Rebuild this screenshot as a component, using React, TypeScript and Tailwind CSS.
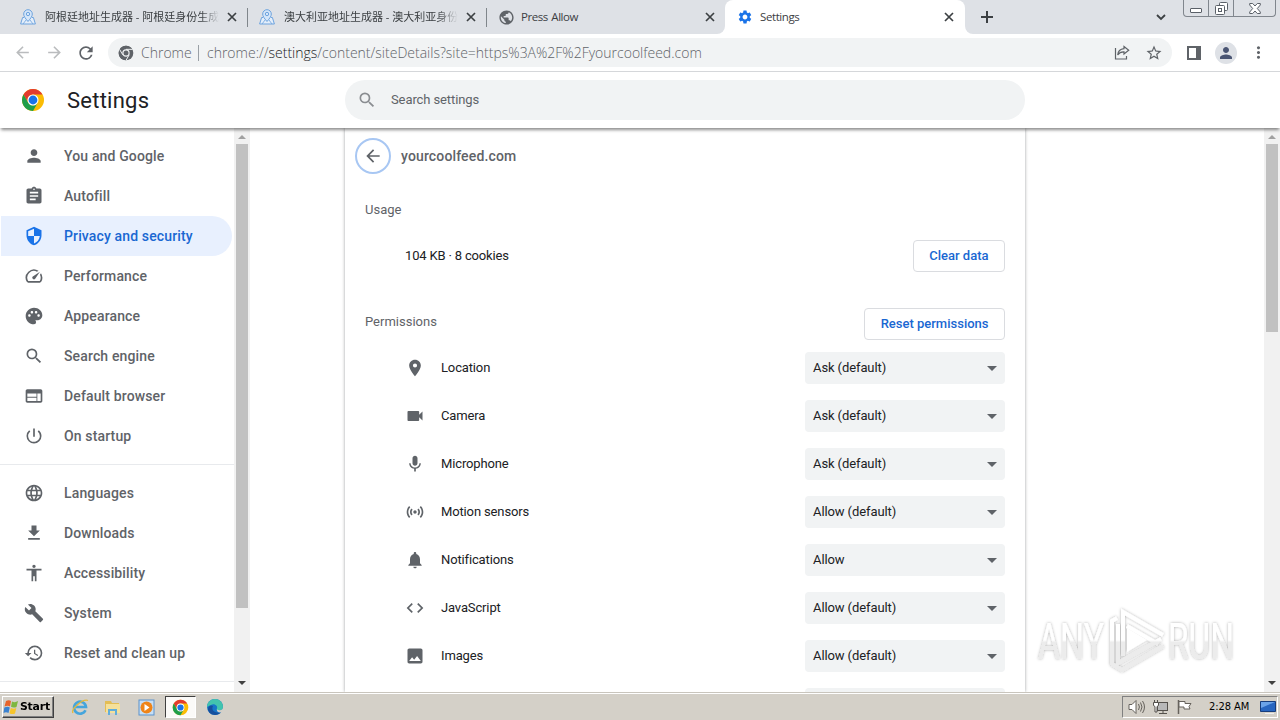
import type { ReactNode } from "react";
import {
  MdAccessibility,
  MdArrowBack,
  MdArrowForward,
  MdAssignment,
  MdBuild,
  MdCode,
  MdImage,
  MdLanguage,
  MdMic,
  MdMoreVert,
  MdNotifications,
  MdPalette,
  MdPerson,
  MdPlace,
  MdPowerSettingsNew,
  MdPublic,
  MdRefresh,
  MdRestore,
  MdSearch,
  MdSecurity,
  MdSensors,
  MdSettings,
  MdSpeed,
  MdStarBorder,
  MdVideocam,
  MdWeb,
} from "react-icons/md";

const NAV_MAIN = [
  { label: "You and Google", icon: MdPerson },
  { label: "Autofill", icon: MdAssignment },
  { label: "Privacy and security", icon: MdSecurity, active: true },
  { label: "Performance", icon: MdSpeed },
  { label: "Appearance", icon: MdPalette },
  { label: "Search engine", icon: MdSearch },
  { label: "Default browser", icon: MdWeb },
  { label: "On startup", icon: MdPowerSettingsNew },
];

const NAV_ADVANCED = [
  { label: "Languages", icon: MdLanguage },
  { label: "Downloads", icon: DownloadIcon },
  { label: "Accessibility", icon: MdAccessibility },
  { label: "System", icon: MdBuild },
  { label: "Reset and clean up", icon: MdRestore },
];

const PERMISSIONS = [
  { label: "Location", value: "Ask (default)", icon: MdPlace },
  { label: "Camera", value: "Ask (default)", icon: MdVideocam },
  { label: "Microphone", value: "Ask (default)", icon: MdMic },
  { label: "Motion sensors", value: "Allow (default)", icon: MdSensors },
  { label: "Notifications", value: "Allow", icon: MdNotifications },
  { label: "JavaScript", value: "Allow (default)", icon: MdCode },
  { label: "Images", value: "Allow (default)", icon: MdImage },
];

function DownloadIcon({ size = 20, className }: { size?: number; className?: string }) {
  return (
    <svg width={size} height={size} viewBox="0 0 24 24" fill="currentColor" className={className}>
      <path d="M19 9h-4V3H9v6H5l7 7 7-7zM5 18v2h14v-2H5z" />
    </svg>
  );
}

function ChromeLogo({ size, mono }: { size: number; mono?: boolean }) {
  return (
    <svg width={size} height={size} viewBox="0 0 48 48" className="shrink-0">
      <circle cx="24" cy="24" r="22" fill={mono ? "#5f6368" : "#fbbc04"} />
      <path d="M4.95 13A22 22 0 0 1 43.05 13L24 13A11 11 0 0 0 14.47 29.5Z" fill={mono ? "#5f6368" : "#e33b2e"} />
      <path d="M4.95 13L14.47 29.5A11 11 0 0 0 33.53 29.5L24 46A22 22 0 0 1 4.95 13Z" fill={mono ? "#5f6368" : "#1e9e4a"} />
      {mono && (
        <path d="M24 13H44M14.47 29.5L4.5 13M33.53 29.5L24 46" stroke="#f1f3f4" strokeWidth="3" />
      )}
      <circle cx="24" cy="24" r="11" fill={mono ? "#f1f3f4" : "#fff"} />
      <circle cx="24" cy="24" r={mono ? 7.5 : 8.8} fill={mono ? "#5f6368" : "#1a73e8"} />
    </svg>
  );
}

function MapPinLogo() {
  return (
    <svg width="16" height="16" viewBox="0 0 16 16" fill="none" stroke="#6da3de" className="shrink-0">
      <path d="M4 8.5H2.6L.6 15h14.8l-2-6.5H12" fill="#e4eefa" />
      <path d="M3 15l3-4M13 15l-3-4" strokeWidth=".8" />
      <path d="M8 12.5C5 9 3.7 7.2 3.7 5a4.3 4.3 0 0 1 8.6 0c0 2.2-1.3 4-4.3 7.5Z" fill="#d5e6f9" />
      <circle cx="8" cy="5" r="1.7" />
    </svg>
  );
}

function CloseIcon() {
  return (
    <svg width="10" height="10" viewBox="0 0 10 10" stroke="#3c4043" strokeWidth="1.7" className="shrink-0">
      <path d="M1 1l8 8M9 1L1 9" />
    </svg>
  );
}

function TabTitle({ children, className = "" }: { children: ReactNode; className?: string }) {
  return (
    <span
      className={`min-w-0 flex-1 whitespace-nowrap leading-4 text-[#3c4043] font-['Open_Sans','Noto_Sans_CJK_SC',sans-serif] ${className}`}
    >
      {children}
    </span>
  );
}

function TabStrip() {
  return (
    <div className="flex h-[34px] bg-[#dee1e6]">
      <div className="flex w-[247px] items-center pl-5 pr-[10px]">
        <MapPinLogo />
        <TabTitle className="ml-[9px] mr-[8px] text-[11px] [mask-image:linear-gradient(to_right,#000_90%,transparent)]">
          阿根廷地址生成器 - 阿根廷身份生成
        </TabTitle>
        <CloseIcon />
      </div>
      <div className="mt-2 h-[19px] w-px bg-[#80868b]" />
      <div className="flex w-[238px] items-center pl-[11px] pr-[10px]">
        <MapPinLogo />
        <TabTitle className="ml-[9px] mr-[8px] text-[11px] [mask-image:linear-gradient(to_right,#000_88%,transparent)]">
          澳大利亚地址生成器 - 澳大利亚身份
        </TabTitle>
        <CloseIcon />
      </div>
      <div className="mt-2 h-[19px] w-px bg-[#80868b]" />
      <div className="w-[238px] bg-white">
        <div className="flex h-full items-center rounded-br-lg bg-[#dee1e6] pl-[11px] pr-[10px]">
          <MdPublic size={17} className="shrink-0 text-[#5f6368]" />
          <TabTitle className="ml-[6px] text-[11.5px] tracking-[-0.45px] [word-spacing:1px]">Press Allow</TabTitle>
          <CloseIcon />
        </div>
      </div>
      <div className="flex w-[240px] items-center rounded-t-lg bg-white pl-[12px] pr-[11px]">
        <MdSettings size={16} className="shrink-0 text-[#1a73e8]" />
        <TabTitle className="ml-[7px] text-[11.5px] tracking-[-0.4px]">Settings</TabTitle>
        <CloseIcon />
      </div>
      <div className="flex flex-1 bg-white">
        <div className="flex flex-1 items-center rounded-bl-lg bg-[#dee1e6] pl-4">
          <svg width="12" height="12" viewBox="0 0 12 12" stroke="#3c4043" strokeWidth="2">
            <path d="M6 0v12M0 6h12" />
          </svg>
          <svg width="10" height="7" viewBox="0 0 10 7" fill="none" stroke="#3c4043" strokeWidth="1.8" className="ml-[163px]">
            <path d="M1 1l4 4 4-4" />
          </svg>
        </div>
      </div>
      <div className="flex bg-[#dee1e6] pr-1">
        <div className="flex h-[17px] w-[93px] rounded-b-[4px] border border-t-0 border-[#80868d]">
          <div className="flex w-[25px] items-end justify-center border-r border-[#80868d] pb-[3px]">
            <div className="h-[5px] w-3 rounded-[1px] border border-[#5a6068] bg-white" />
          </div>
          <div className="flex w-[25px] items-center justify-center border-r border-[#80868d]">
            <svg width="13" height="13" viewBox="0 0 13 13" fill="#fff" stroke="#5a6068">
              <rect x="4.5" y=".5" width="8" height="8" rx="1" />
              <rect x=".5" y="3.5" width="9" height="9" rx="1" />
              <rect x="3.5" y="6.5" width="3" height="3" />
            </svg>
          </div>
          <div className="flex flex-1 items-center justify-center">
            <svg width="12" height="11" viewBox="0 0 12 11" fill="#fff" stroke="#5a6068">
              <path d="M.7.5h3L6 3 8.300.5h3v1.500L8.300 5.500l3 3.500v1.500h-3L6 8l-2.300 2.500h-3V9l3-3.500-3-3.500Z" />
            </svg>
          </div>
        </div>
      </div>
    </div>
  );
}

function Toolbar() {
  return (
    <div className="flex h-[38px] items-center border-b border-[#d5d7da] bg-white pl-[13px]">
      <MdArrowBack size={19} className="text-[#babcbe]" />
      <MdArrowForward size={19} className="ml-[13px] text-[#babcbe]" />
      <MdRefresh size={20} className="ml-[12px] text-[#5f6368]" />
      <div className="ml-3 flex h-[29px] w-[1064px] items-center rounded-full bg-[#f1f3f4] pl-[10px] pr-[9px] font-['Open_Sans',sans-serif] text-[14px] font-light text-[#5f6368]">
        <ChromeLogo size={16} mono />
        <span className="ml-[7px] w-[57px]">Chrome</span>
        <div className="mr-2 h-4 w-px bg-[#9aa0a6]" />
        <span className="flex-1 whitespace-nowrap">
          chrome://<span className="text-[#202124]">settings</span>
          /content/siteDetails?site=https%3A%2F%2Fyourcoolfeed.com
        </span>
        <svg width="16" height="15" viewBox="0 0 16 15" fill="none" stroke="#5f6368" strokeWidth="1.2" className="mr-[15px]">
          <path d="M1.500 3v11h11v-3" />
          <path d="M10 1.500l4.700 3.700L10 9V6.800C7 6.600 5 8 3.700 10 4 6.500 6.500 4 10 3.700Z" />
        </svg>
        <MdStarBorder size={18} className="text-[#5f6368]" />
      </div>
      <div className="ml-[15px] h-[14px] w-[14px] border-2 border-r-[5px] border-[#5f6368]" />
      <div className="ml-[14px] flex h-[22px] w-[22px] items-center justify-center rounded-full bg-[#dee1e6]">
        <MdPerson size={18} className="text-[#4a5573]" />
      </div>
      <MdMoreVert size={19} className="ml-[12px] text-[#5f6368]" />
    </div>
  );
}

function SettingsHeader() {
  return (
    <header className="relative z-10 flex h-[56px] items-center bg-white pl-[21px] shadow-[0_3px_3px_-1px_rgba(0,0,0,0.45)]">
      <ChromeLogo size={24} />
      <h1 className="ml-[22px] w-[278px] text-[22px] tracking-[0.25px] text-[#202124]">Settings</h1>
      <div className="flex h-10 w-[680px] items-center rounded-full bg-[#f1f3f4] pl-3 text-[13px] tracking-[-0.1px] text-[#5f6368]">
        <MdSearch size={20} className="mr-[14px] text-[#8a8d91]" />
        Search settings
      </div>
    </header>
  );
}

function NavItem({ item }: { item: (typeof NAV_MAIN)[number] }) {
  const Icon = item.icon;
  return (
    <li
      className={`ml-px mr-[2px] flex h-10 items-center rounded-r-full pl-[23px] text-[14px] font-medium tracking-[0.14px] ${
        item.active ? "bg-[#e8f0fe] text-[#1967d2]" : "text-[#5f6368]"
      }`}
    >
      <Icon size={20} className={item.active ? "mr-5 text-[#1a73e8]" : "mr-5"} />
      {item.label}
    </li>
  );
}

function ScrollArrow({ down }: { down?: boolean }) {
  return (
    <svg width="8" height="4" viewBox="0 0 8 4" fill={down ? "#404040" : "#a0a0a0"}>
      <path d={down ? "M0 0h8L4 4Z" : "M0 4h8L4 0Z"} />
    </svg>
  );
}

function Scrollbar({ thumb }: { thumb: string }) {
  return (
    <div className="flex w-4 shrink-0 flex-col items-center bg-[#f1f1f1] pt-[7px]">
      <ScrollArrow />
      <div className={`mt-[5px] w-3 bg-[#c1c1c1] ${thumb}`} />
      <div className="mt-auto pb-[7px]">
        <ScrollArrow down />
      </div>
    </div>
  );
}

function Sidebar() {
  return (
    <aside className="flex w-[250px] shrink-0">
      <nav className="flex-1 overflow-hidden pt-2">
        <ul>
          {NAV_MAIN.map((item) => (
            <NavItem key={item.label} item={item} />
          ))}
        </ul>
        <div className="my-2 h-px bg-[#e8eaed]" />
        <ul>
          {NAV_ADVANCED.map((item) => (
            <NavItem key={item.label} item={item} />
          ))}
        </ul>
        <div className="mt-2 h-px bg-[#e8eaed]" />
      </nav>
      <Scrollbar thumb="h-[464px]" />
    </aside>
  );
}

function OutlineButton({ children }: { children: ReactNode }) {
  return (
    <button className="h-8 rounded-[4px] border border-[#dadce0] px-[15.5px] text-[13px] font-medium text-[#1967d2]">
      {children}
    </button>
  );
}

function SiteDetails() {
  return (
    <main className="flex flex-1 justify-between overflow-hidden bg-white">
      <section className="ml-[95px] w-[680px] pl-5 pr-5 shadow-[0_0_3px_rgba(60,64,67,0.5)]">
        <div className="-ml-[10px] flex h-14 items-center">
          <div className="flex h-9 w-9 items-center justify-center rounded-full border-2 border-[#a8c7f3]">
            <MdArrowBack size={20} className="text-[#5f6368]" />
          </div>
          <h2 className="ml-[10px] text-[14px] font-medium tracking-[0.14px] text-[#5f6368]">yourcoolfeed.com</h2>
        </div>
        <div className="mt-[14px] h-6 text-[13px] leading-6 text-[#5f6368]">Usage</div>
        <div className="mt-[18px] flex h-8 items-center justify-between pl-10 text-[13px] text-[#202124]">
          <span className="tracking-[-0.17px]">104 KB · 8 cookies</span>
          <OutlineButton>Clear data</OutlineButton>
        </div>
        <div className="mt-9 flex h-8 justify-between">
          <span className="text-[13px] leading-[27px] text-[#5f6368]">Permissions</span>
          <OutlineButton>Reset permissions</OutlineButton>
        </div>
        <ul className="mt-1">
          {PERMISSIONS.map(({ label, value, icon: Icon }) => (
            <li key={label} className="flex h-12 items-center pl-10 text-[13px] text-[#202124]">
              <Icon size={20} className="text-[#5f6368]" />
              <span className="ml-4 flex-1 tracking-[-0.14px]">{label}</span>
              <div className="flex h-8 w-[200px] items-center justify-between rounded-[4px] bg-[#f1f3f4] px-2 tracking-[-0.1px]">
                {value}
                <svg width="10" height="5" viewBox="0 0 10 5" fill="#5f6368">
                  <path d="M0 0h10L5 5Z" />
                </svg>
              </div>
            </li>
          ))}
        </ul>
        <div className="ml-auto mt-2 h-8 w-[200px] rounded-[4px] bg-[#f1f3f4]" />
      </section>
      <Scrollbar thumb="h-[188px]" />
    </main>
  );
}

function Watermark() {
  return (
    <svg width="230" height="76" viewBox="0 0 230 76" className="absolute left-[1030px] top-[602px] z-20">
      <defs>
        <linearGradient id="fade" x1="0" y1="0" x2="0" y2="76" gradientUnits="userSpaceOnUse">
          <stop offset="0.5" stopColor="#fff" />
          <stop offset="0.53" stopColor="#ececec" />
        </linearGradient>
        <filter id="glow" x="-20%" y="-20%" width="140%" height="140%">
          <feDropShadow dx="0" dy="0" stdDeviation="1.7" floodColor="#000" floodOpacity="0.32" />
        </filter>
      </defs>
      <g filter="url(#glow)" fill="url(#fade)" fontFamily="Roboto, sans-serif" fontSize="50" fontWeight="400">
        <text x="8" y="57" textLength="66" lengthAdjust="spacingAndGlyphs">ANY</text>
        <text x="138" y="57" textLength="66" lengthAdjust="spacingAndGlyphs">RUN</text>
        <g fill="none" stroke="url(#fade)" strokeWidth="4">
          <path d="M87 16l-5 3v44M88 22v39l43-24" />
          <path d="M93 54V10l40 23M97 24l31 18" />
          <path d="M82 62l10 6 41-24" />
        </g>
        <path d="M97 26v24l20-12Z" fill="#fff" />
      </g>
    </svg>
  );
}

function Taskbar() {
  return (
    <footer className="flex h-7 items-center border-t border-[#c9c5bd] bg-[#d4d0c8] pl-[2px] pr-[2px] shadow-[inset_0_1px_0_#fff]">
      <div className="mt-px flex h-[22px] w-[52px] items-center border border-b-[#404040] border-l-white border-r-[#404040] border-t-white font-['DejaVu_Sans_Condensed','DejaVu_Sans',sans-serif] text-[11px] font-bold tracking-[-0.2px] text-black shadow-[inset_-1px_-1px_0_#808080]">
        <svg width="16" height="16" viewBox="0 0 16 16" className="shrink-0">
          <path d="M3 2q3-1.500 5 0L7 7.500q-2-1.300-5.500 0Z" fill="#e8642b" />
          <path d="M9 2.500q3 1.500 6-.5L13.500 8q-3 1.300-5.500-.2Z" fill="#7eb740" />
          <path d="M1.300 8.500q3.500-1.300 5.500 0L5.500 14q-2.500-1.500-5 0Z" fill="#3b82d0" />
          <path d="M7.800 9q3 1.300 5.500 0L12 14.500q-3 1.300-5.500-.3Z" fill="#f7c52b" />
        </svg>
        <span className="ml-px origin-left scale-x-110">Start</span>
      </div>
      <div className="mt-px flex items-center">
        <svg width="18" height="18" viewBox="0 0 18 18" fill="none" className="ml-[17px]">
          <path d="M14.500 12.200A6 6 0 1 1 15 9H4.500" stroke="#45a5dc" strokeWidth="2.6" />
          <path d="M2 15C-.5 11 12 .5 17 2.500" stroke="#e5b93b" strokeWidth="1.3" />
        </svg>
        <svg width="17" height="17" viewBox="0 0 17 17" className="ml-[15px]">
          <path d="M1 2h6l1 2h7v9H1Z" fill="#e3bd55" />
          <path d="M2 5h14v9H2Z" fill="#f5e09a" />
          <path d="M4 16v-6h9v6h-2v-4H6v4Z" fill="#62add9" />
        </svg>
        <svg width="17" height="17" viewBox="0 0 17 17" className="ml-[17px]">
          <rect x="1" y="1" width="15" height="15" fill="#c7dff5" stroke="#5b92cb" />
          <circle cx="8.5" cy="8.5" r="6" fill="#ef8418" />
          <path d="M6.500 5v7l5-3.500Z" fill="#fff" />
        </svg>
        <div className="ml-[10px] flex h-[22px] w-[31px] items-center justify-center border border-b-white border-l-[#404040] border-r-white border-t-[#404040] bg-[#fbfaf8]">
          <ChromeLogo size={17} />
        </div>
        <svg width="18" height="18" viewBox="0 0 18 18" className="ml-[10px]">
          <circle cx="9" cy="9" r="8" fill="#1676c8" />
          <path d="M1 9a8 8 0 0 1 16 0c0 4-5 4-6.500 2.500C13 8 8 5 5 7 3 8 2 8 1 9Z" fill="#42c4ae" />
          <path d="M7 8c-2 4 1 7.500 8 6.500-4 4-12 3-13-3C2 8 5 6.500 7 8Z" fill="#164f9d" />
          <path d="M11 11.500c3 1.500 6 .5 6-2l.5 3.500-3 1.500c-3 0-4-1.500-3.500-3Z" fill="#d4d0c8" />
        </svg>
      </div>
      <div className="ml-auto mt-px flex h-[22px] w-[156px] items-center border border-b-white border-l-[#808080] border-r-white border-t-[#808080] pl-[5px] font-['DejaVu_Sans_Condensed','DejaVu_Sans',sans-serif] text-[11px] text-black">
        <svg width="18" height="16" viewBox="0 0 18 16" fill="#fff" stroke="#66625c">
          <path d="M1 5.500h3l4-4v13l-4-4H1Z" />
          <path d="M10.500 5q1.800 3 0 6M12.500 3.500q3 4.500 0 9M14.500 2q4 6 0 12" fill="none" />
        </svg>
        <svg width="17" height="16" viewBox="0 0 17 16" fill="#fff" stroke="#55514c" className="ml-[6px]">
          <rect x="5.5" y="3.5" width="10" height="8" fill="#b8b8b8" />
          <path d="M7 14.500h8M11 12v2" />
          <path d="M1.500 3.500h5v3l-1.500 1V13H3V7.500l-1.500-1ZM2.500 3.500V1M5.500 3.500V1" />
        </svg>
        <svg width="17" height="16" viewBox="0 0 17 16" fill="#fff" stroke="#66625c" className="ml-[7px]">
          <path d="M2.500 1v14" strokeWidth="1.5" />
          <path d="M3 2.500h6v2h6l-2 3 1 2.500H8v-2H3Z" />
        </svg>
        <span className="ml-4 w-[51px] whitespace-nowrap tracking-[-0.05px]">2:28 AM</span>
        <svg width="16" height="15" viewBox="0 0 16 15">
          <path d="M.5 1.500h15v10H.5Z" fill="#2866c0" stroke="#173d7c" />
          <path d="M1 2h14L1 8Z" fill="#6ba3e8" />
          <path d="M5 13h9v1H5Z" fill="#eee" />
        </svg>
      </div>
    </footer>
  );
}

export default function App() {
  return (
    <div className="relative flex h-[720px] w-[1280px] flex-col overflow-hidden bg-white font-['Roboto',sans-serif]">
      <TabStrip />
      <Toolbar />
      <SettingsHeader />
      <div className="flex min-h-0 flex-1">
        <Sidebar />
        <SiteDetails />
      </div>
      <Taskbar />
      <Watermark />
    </div>
  );
}
